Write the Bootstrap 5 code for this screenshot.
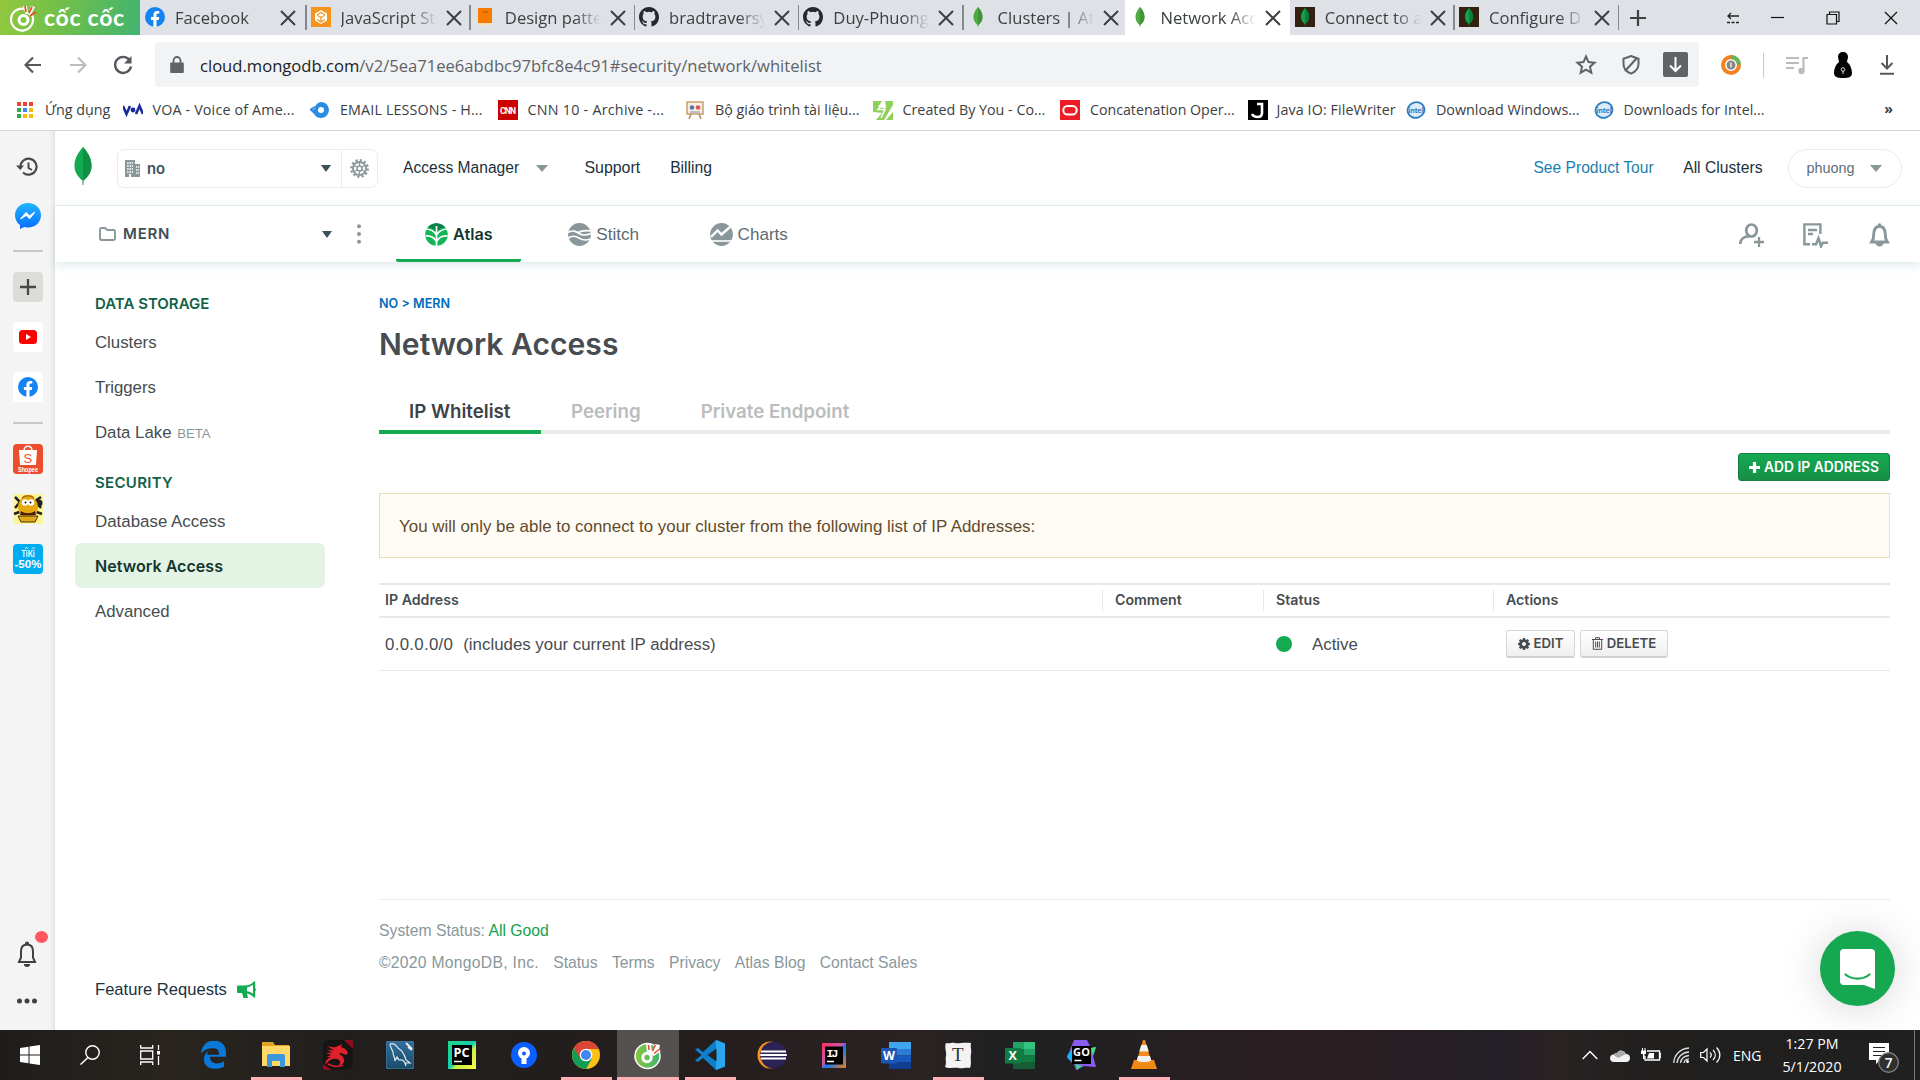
<!DOCTYPE html>
<html lang="en">
<head>
<meta charset="utf-8">
<title>Network Access | Cloud: MongoDB Cloud</title>
<link href="https://cdn.jsdelivr.net/npm/bootstrap@5.3.0/dist/css/bootstrap.min.css" rel="stylesheet">
<style>
  body{width:1920px;height:1080px;overflow:hidden;background:#fff;font-family:"Liberation Sans",Arial,sans-serif;color:#464c4f}
  svg{display:block;flex:none}
  .ui{font-family:"Open Sans","Noto Sans",sans-serif}
  .semi{font-family:Inter,"Liberation Sans",sans-serif;font-weight:600}
  .slot{display:flex;align-items:center;justify-content:center;flex:none}
  /* browser chrome */
  .tabstrip{height:35px;background:#dee1e6}
  .brand{width:140px;background:linear-gradient(100deg,#92c83e,#6fbf4b 45%,#41b471);color:#fff;padding-left:10px}
  .brand span{font-family:Lato,sans-serif;font-weight:700;font-size:23px;line-height:35px;margin-left:6px;letter-spacing:.7px}
  .btab{width:164.25px;height:35px;padding-left:5px;position:relative;color:#3c4043}
  .btab.first{width:165.6px}
  .btab.short{width:162.9px}
  .btab .fav{width:20px;height:20px;margin-top:-1px}
  .btab .ttl{width:97px;margin-left:10px;font-size:16.6px;line-height:35px;white-space:nowrap;overflow:hidden;-webkit-mask-image:linear-gradient(90deg,#000 72%,transparent 99%);mask-image:linear-gradient(90deg,#000 72%,transparent 99%)}
  .btab .cls{margin-left:8px}
  .btab.sep::after{content:"";position:absolute;right:-1px;top:5px;width:1.5px;height:25px;background:#85888c}
  .btab.on{background:#fff}
  .toolbar{height:60px;padding-left:10px}
  .omni{width:1544px;height:45px;margin-top:-1px;background:#f1f3f4;border-radius:4px;font-size:16.6px;color:#5f6368}
  .omni b{font-weight:400;color:#202124}
  .omni .addr{line-height:20px;padding-top:2px}
  .marks{height:36px;padding-left:15px;font-size:14.3px;color:#3c4043;border-bottom:1px solid #d5d6da;margin-top:0}
  .bm{width:187.5px;height:30px;flex:none;white-space:nowrap;gap:10px}
  /* side rail */
  .rail{width:55px;background:#f4f4f4;box-shadow:inset -4px 0 4px -3px #d8d8d8;padding-left:12.5px;position:relative}
  .rail hr{width:30px;margin:0;border:0;height:2px;background:#c9c9c9;opacity:1}
  .tile{width:30px;height:30px;border-radius:4px;background:#fff;display:flex;align-items:center;justify-content:center;margin-bottom:20px;overflow:hidden}
  /* cloud header */
  .top1{height:75px;border-bottom:1px solid #e8edeb;font-size:15.6px;color:#21313c;padding-left:19px}
  .top2{height:56px;box-shadow:0 3px 9px rgba(180,205,215,.45);position:relative;padding-left:43px;color:#5d6c74;font-size:17.1px}
  .orgbox{width:261px;height:39px;border:1px solid #e7eeec;border-radius:7px;margin-left:25px}
  .orgbox .cog{width:36px;height:37px;border-left:1px solid #e7eeec}
  .pill{width:114px;height:39px;border:1px solid #e7eeec;border-radius:20px;font-size:14.4px;color:#5d6c74;padding:0 19px 0 18px}
  .caret{width:0;height:0;border:6px solid transparent;border-top:7px solid #89979b;border-bottom:0;flex:none}
  .caret.dk{border-top-color:#3d4f58;border-left-width:5.5px;border-right-width:5.5px}
  .prod{height:56px;gap:5px;padding-top:1px}
  .prod.on{color:#13372f;border-bottom:3px solid #13aa52;padding-top:3px;border-radius:2px}
  /* left nav */
  .side{width:324px;padding:30px 0 0 20px;font-size:16.8px;color:#464c4f}
  .side h6{font-size:15px;color:#116149;margin:0;padding-left:20px;letter-spacing:0;line-height:23px}
  .side a{display:block;height:45px;line-height:45px;padding-left:20px;width:250px;color:inherit;text-decoration:none;border-radius:6px}
  .side a.low{line-height:47px}
  .side a.on{background:#e4f4e4;color:#13372f;font-size:16.1px}
  .side small{font-size:13.2px;color:#89979b;margin-left:1px}
  /* content */
  .content{width:1511px}
  .crumb{font-size:12.6px;line-height:20px;color:#006cbc;margin-top:32px}
  .content h1{font-size:30.1px;line-height:36px;margin:12px 0 0}
  .subtabs{border-bottom:4px solid #e7eae9;height:48px;margin-top:24px;font-size:18.7px;color:#babdbe}
  .subtabs div{height:48px;line-height:52px;border-bottom:4px solid transparent;padding:0 30px}
  .subtabs .on{width:162px;color:#3d4347;border-color:#13aa52}
  .addip{width:152px;height:28px;background:linear-gradient(#15aa54,#178e45);border:1px solid #14803f;border-radius:3px;color:#fff;font-size:13.8px;margin:19px 0 12px;padding:0;line-height:26px}
  .warnbox{height:65px;border:1px solid #f0ddb8;background:#fffcf5;border-radius:0;padding:0 0 0 19px;margin:0;color:#5f4b2b;font-size:16.92px;line-height:65px}
  .grid{margin-top:25px}
  .ghead{height:35px;border-top:2px solid #e7e9e9;border-bottom:2px solid #e7e9e9;font-size:14.2px;color:#464c4f}
  .grow{height:53px;border-bottom:1px solid #e7e9e9;font-size:16.85px;padding-top:1px}
  .ghead>div{height:21px;line-height:20px;padding-left:12px;border-left:1px solid #e7e9e9}
  .ghead>div:first-child{border:0;padding-left:6px}
  .c1{width:723px}.c2{width:161px}.c3{width:230px}.c4{flex:1}
  .gbtn{height:28px;border:1px solid #d3d7d7;border-bottom:2px solid #ccd1d1;border-radius:3px;background:linear-gradient(#fff,#efefef);font-size:13.2px;color:#464c4f;padding:0;line-height:25px;display:flex;align-items:center;justify-content:center;gap:4px;margin-top:-1px}
  .foot{margin-top:228px;border-top:1px solid #e9ebea;font-size:15.75px;color:#89979b;line-height:32px;padding-top:15px}
  .legal{font-size:15.7px;gap:14.3px}
  .legal span:first-child{letter-spacing:.28px}
  .chat{position:absolute;right:25px;top:800px;width:75px;height:75px;border-radius:50%;background:#16a851;box-shadow:0 2px 40px rgba(0,0,0,.17)}
  /* taskbar */
  .taskbar{height:50px;background:linear-gradient(90deg,#1f1d1c,#29241e 9%,#211f1e 18%,#241d1d 36%,#2b2223 48%,#1f2021 52%,#2a1e21 68%,#241f27 78%,#2a2324 81%,#201f1e 86%,#212020);color:#fff}
  .app{width:62px;height:50px;position:relative;display:flex;align-items:center;justify-content:center;flex:none}
  .app.run::after{content:"";position:absolute;left:5.5px;right:5.5px;bottom:0;height:3px;background:#ffb0b4}
  .app.cur{background:#53504f}.app.cur::after{left:0;right:0}
</style>
<script src="https://cdn.jsdelivr.net/npm/bootstrap@5.3.0/dist/js/bootstrap.bundle.min.js"></script>
</head>
<body class="d-flex flex-column">
<svg width="0" height="0" style="position:absolute"><defs>
  <symbol id="x" viewBox="0 0 16 16"><path d="M1 1l14 14M15 1L1 15" stroke="#3c4043" stroke-width="2" fill="none"/></symbol>
  <symbol id="gh" viewBox="0 0 16 16"><path fill="#24292e" d="M8 0C3.58 0 0 3.58 0 8c0 3.54 2.29 6.53 5.47 7.59.4.07.55-.17.55-.38 0-.19-.01-.82-.01-1.49-2.01.37-2.53-.49-2.69-.94-.09-.23-.48-.94-.82-1.13-.28-.15-.68-.52-.01-.53.63-.01 1.08.58 1.23.82.72 1.21 1.87.87 2.33.66.07-.52.28-.87.51-1.07-1.78-.2-3.64-.89-3.64-3.95 0-.87.31-1.59.82-2.15-.08-.2-.36-1.02.08-2.12 0 0 .67-.21 2.2.82a7.6 7.6 0 0 1 4 0c1.53-1.04 2.2-.82 2.2-.82.44 1.1.16 1.92.08 2.12.51.56.82 1.27.82 2.15 0 3.07-1.87 3.75-3.65 3.95.29.25.54.73.54 1.48 0 1.07-.01 1.93-.01 2.2 0 .21.15.46.55.38A8 8 0 0 0 16 8c0-4.42-3.58-8-8-8z"/></symbol>
  <symbol id="leaf" viewBox="0 0 20 20"><path d="M10 0C6.500 4 5.500 7 5.500 10c0 4 2 6 4 8l.3 2h.4l.3-2c2-2 4-4 4-8 0-3-1-6-4.500-10z" fill="#4faa41"/><path d="M10 0v18.300c2.500-2.300 4.500-4.300 4.500-8.300 0-3-1-6-4.500-10z" fill="#3f9636"/></symbol>
  <symbol id="leafd" viewBox="0 0 20 20"><path fill="#33200f" d="M0 0h20v20H0z"/><path d="M10 1C6.500 5 6 7.500 6 10c0 3.500 2 5.500 3.700 7l.1 2h.4l.1-2C12 15.500 14 13.500 14 10c0-2.500-.5-5-4-9z" fill="#12a14a"/><path d="M10 1v16c2-1.500 4-3.500 4-7 0-2.500-.5-5-4-9z" fill="#0b7f3a"/></symbol>
  <symbol id="fb" viewBox="0 0 20 20"><circle cx="10" cy="10" r="10" fill="#1484f2"/><path fill="#fff" d="M8.400 20v-7H5.900v-3h2.500V7.900c0-2.600 1.500-4 3.800-4 1.100 0 2.100.2 2.100.2v2.400h-1.200c-1.200 0-1.600.8-1.600 1.500v2h2.700l-.4 3h-2.300v7z"/></symbol>
  <symbol id="intel" viewBox="0 0 20 20"><ellipse cx="10" cy="10" rx="8.500" ry="7.800" fill="#dcebf7" stroke="#2b80c3" stroke-width="1.800" transform="rotate(-18 10 10)"/><text x="2.500" y="12.800" font-size="7.500" font-weight="700" fill="#1e6fb5" font-family="Lato" textLength="15">intel</text></symbol>
  <symbol id="cc" viewBox="0 0 28 32"><path d="M22 13A11 11 0 1 1 15 7" fill="none" stroke="#fff" stroke-width="2.200"/><circle cx="13.500" cy="18" r="4.500" fill="none" stroke="#fff" stroke-width="3"/><path d="M15.500 12L13 4l4 0 1 8zM18 12l3-8 4 1-5 9z" fill="#fff"/><path d="M16 10l-1-6M19 11l3-6M20 14l6-4" stroke="#ef4b34" stroke-width="1.700"/></symbol>
  <symbol id="cog" viewBox="0 0 16 16"><path fill-rule="evenodd" d="M6.600 0h2.800l.4 2 1.300.5L12.800 1.300l2 2-1.200 1.700.5 1.300 1.900.3v2.800l-1.900.4-.5 1.300 1.200 1.700-2 2-1.700-1.200-1.300.5-.4 1.900H6.600l-.4-1.900-1.300-.5-1.700 1.200-2-2 1.200-1.700-.5-1.300L0 9.400V6.600l1.900-.3.5-1.300L1.200 3.300l2-2 1.700 1.200L6.200 2zM8 5.300a2.700 2.700 0 1 0 0 5.400 2.700 2.700 0 0 0 0-5.400z"/></symbol>
</defs></svg>

<!-- tab strip -->
<div class="tabstrip d-flex ui flex-shrink-0">
  <div class="brand d-flex align-items-center"><svg width="28" height="32"><use href="#cc"/></svg><span>cốc cốc</span></div>
  <div class="btab first sep d-flex align-items-center"><svg class="fav"><use href="#fb"/></svg><span class="ttl">Facebook</span><svg class="cls" width="16" height="16"><use href="#x"/></svg></div>
  <div class="btab sep d-flex align-items-center"><svg class="fav" viewBox="0 0 20 20"><path fill="#f7941e" d="M0 0h20v20H0z"/><path d="M10 3l6 3.500v7L10 17l-6-3.500v-7z" fill="#fff"/><path d="M6 8l4-2.500L14 8M6 12.500l4 2.500 4-2.500M6 8l4 2.500 4-2.500M10 10.500V15" stroke="#f7941e" stroke-width="1.300" fill="none"/></svg><span class="ttl">JavaScript St</span><svg class="cls" width="16" height="16"><use href="#x"/></svg></div>
  <div class="btab sep d-flex align-items-center"><svg class="fav" viewBox="0 0 20 20"><path d="M3 1h14v15H3z" fill="#f57c00"/><path d="M3 16h14v2H4z" fill="#ffe0b8"/><path d="M8 5h5" stroke="#a85400"/></svg><span class="ttl">Design patte</span><svg class="cls" width="16" height="16"><use href="#x"/></svg></div>
  <div class="btab sep d-flex align-items-center"><svg class="fav"><use href="#gh"/></svg><span class="ttl">bradtraversy</span><svg class="cls" width="16" height="16"><use href="#x"/></svg></div>
  <div class="btab sep d-flex align-items-center"><svg class="fav"><use href="#gh"/></svg><span class="ttl">Duy-Phuong</span><svg class="cls" width="16" height="16"><use href="#x"/></svg></div>
  <div class="btab short d-flex align-items-center"><svg class="fav"><use href="#leaf"/></svg><span class="ttl">Clusters | At</span><svg class="cls" width="16" height="16"><use href="#x"/></svg></div>
  <div class="btab on d-flex align-items-center"><svg class="fav"><use href="#leaf"/></svg><span class="ttl">Network Acc</span><svg class="cls" width="16" height="16"><use href="#x"/></svg></div>
  <div class="btab sep d-flex align-items-center"><svg class="fav"><use href="#leafd"/></svg><span class="ttl">Connect to a</span><svg class="cls" width="16" height="16"><use href="#x"/></svg></div>
  <div class="btab sep d-flex align-items-center"><svg class="fav"><use href="#leafd"/></svg><span class="ttl">Configure D</span><svg class="cls" width="16" height="16"><use href="#x"/></svg></div>
  <div class="slot" style="width:40px"><svg width="16" height="16"><path d="M8 0v16M0 8h16" stroke="#3c4043" stroke-width="2.200"/></svg></div>
  <div class="d-flex ms-auto" style="padding-right:2px">
    <div class="slot" style="width:38px"><svg width="14" height="12"><path d="M2 4h11M5 1L2 4l3 3" stroke="#222" stroke-width="1.300" fill="none"/><path d="M1 10.500h13" stroke="#222" stroke-width="1.500" stroke-dasharray="3 1.500"/></svg></div>
    <div class="slot" style="width:50px"><svg width="13" height="10"><path d="M0 4.500h13" stroke="#111" stroke-width="1.200"/></svg></div>
    <div class="slot" style="width:62px"><svg width="14" height="14"><path d="M1 3.500h9.500v9.500H1zM3.500 3.500V1h9.500v9.500h-2.500" stroke="#111" stroke-width="1.200" fill="none"/></svg></div>
    <div class="slot" style="width:54px"><svg width="14" height="14"><path d="M1 1l12 12M13 1L1 13" stroke="#111" stroke-width="1.200"/></svg></div>
  </div>
</div>

<!-- toolbar -->
<div class="toolbar ui d-flex align-items-center flex-shrink-0">
  <div class="slot" style="width:45px"><svg width="18" height="18"><path d="M17 9H2M9 1.500L1.500 9 9 16.500" stroke="#55585c" stroke-width="2.200" fill="none"/></svg></div>
  <div class="slot" style="width:45px"><svg width="18" height="18"><path d="M1 9h15M9 1.500L16.500 9 9 16.500" stroke="#bcbec0" stroke-width="2.200" fill="none"/></svg></div>
  <div class="slot" style="width:45px"><svg width="20" height="20"><path d="M16.500 5A8 8 0 1 0 18 11.500" stroke="#55585c" stroke-width="2.400" fill="none"/><path d="M18.500 1v7.500H11z" fill="#55585c"/></svg></div>
  <div class="omni d-flex align-items-center" style="margin-left:10px">
    <div class="slot" style="width:44px;margin-right:1px"><svg width="14" height="18"><path d="M1 6.500h12a.8.8 0 0 1 .8.8v9a.8.8 0 0 1-.8.800H1a.8.8 0 0 1-.8-.8v-9a.8.8 0 0 1 .8-.8z" fill="#5f6368"/><path d="M3.500 7V4.500a3.500 3.500 0 0 1 7 0V7" stroke="#5f6368" stroke-width="1.800" fill="none"/></svg></div>
    <span class="addr"><b>cloud.mongodb.com</b>/v2/5ea71ee6abdbc97bfc8e4c91#security/network/whitelist</span>
    <div class="d-flex ms-auto" style="margin-right:1px">
      <div class="slot" style="width:45px"><svg width="22" height="22" viewBox="0 0 22 22"><path d="M11 2.500l2.500 5.600 6 .6-4.500 4 1.300 6L11 15.600l-5.300 3.100 1.300-6-4.500-4 6-.6z" stroke="#5f6368" stroke-width="2" fill="none"/></svg></div>
      <div class="slot" style="width:45px"><svg width="20" height="22"><path d="M10 2l7.500 2.800V10c0 5-3.500 8-7.500 9.700C6 18 2.500 15 2.500 10V4.800z" stroke="#5f6368" stroke-width="2" fill="none"/><path d="M4 17L16 4" stroke="#5f6368" stroke-width="2"/></svg></div>
      <div class="slot" style="width:45px"><svg width="25" height="25"><rect width="25" height="25" rx="2" fill="#5f6368"/><path d="M12.500 5v14M7 13.500l5.500 5.500 5.500-5.500" stroke="#fff" stroke-width="2" fill="none"/></svg></div>
    </div>
  </div>
  <div class="slot" style="width:64px"><svg width="20" height="20"><circle cx="10" cy="10" r="8" fill="none" stroke="#f58220" stroke-width="4"/><path d="M10 2a8 8 0 0 1 8 7.500" stroke="#5cb85c" stroke-width="4" fill="none"/><circle cx="10" cy="10" r="4.500" fill="#888"/><path d="M10 7.500v5" stroke="#fff" stroke-width="1.200"/></svg></div>
  <div style="width:1px;height:25px;background:#c8cacc"></div>
  <div class="slot" style="width:66px"><svg width="24" height="20"><path d="M1 3h13M1 8h13M1 13h8" stroke="#babcbe" stroke-width="2.200"/><path d="M18.500 16V3H23" stroke="#babcbe" stroke-width="2.200" fill="none"/><circle cx="16.500" cy="16" r="3.200" fill="#babcbe"/></svg></div>
  <div class="slot" style="width:25px"><svg width="18" height="26"><path d="M9 0c3 0 5 2 5 5 0 2-1 3-1 5 3 2 5 7 5 11 0 4-3 5-9 5s-9-1-9-5c0-4 2-9 5-11 0-2-1-3-1-5 0-3 2-5 5-5z" fill="#050505"/><circle cx="9" cy="17.500" r="1.800" fill="none" stroke="#ddd"/><path d="M9 19v3" stroke="#ddd"/></svg></div>
  <div class="slot" style="width:64px"><svg width="14" height="20"><path d="M7 0v13M1.500 8L7 13.500 12.500 8M0 18.800h14" stroke="#55585c" stroke-width="2" fill="none"/></svg></div>
</div>

<!-- bookmarks -->
<div class="marks ui d-flex flex-shrink-0">
  <div class="bm d-flex align-items-center" style="width:107.500px;gap:11px"><svg width="19" height="18"><g><path fill="#ea4335" d="M2 1h4v4H2zM8 1h4v4H8zM14 1h4v4h-4z"/><path fill="#34a853" d="M2 7h4v4H2zM2 13h4v4H2z"/><path fill="#4285f4" d="M8 7h4v4H8z"/><path fill="#fbbc05" d="M14 7h4v4h-4zM8 13h4v4H8zM14 13h4v4h-4z"/></g></svg><span>Ứng dụng</span></div>
  <div class="bm d-flex align-items-center"><svg width="20" height="20"><path d="M0 6l3.500 8L7 6M13 14l3.500-8 3.500 8" stroke="#1a2a9c" stroke-width="2.600" fill="none"/><circle cx="10" cy="10" r="2.400" fill="#1a2a9c"/></svg><span style="letter-spacing:.16px">VOA - Voice of Ame...</span></div>
  <div class="bm d-flex align-items-center"><svg width="20" height="20"><path d="M11 2a8 8 0 1 1-7 12l-4-4 5-1A7.500 7.500 0 0 1 11 2z" fill="#2b8de0"/><path d="M0 10l7-4" stroke="#2b8de0" stroke-width="2"/><circle cx="11" cy="10" r="3" fill="#fff"/></svg><span style="letter-spacing:.15px">EMAIL LESSONS - H...</span></div>
  <div class="bm d-flex align-items-center"><svg width="20" height="20"><path fill="#c00" d="M0 0h20v20H0z"/><text x="2" y="13.500" font-size="8.500" font-weight="700" fill="#fff" font-family="Roboto" textLength="16">CNN</text></svg><span style="letter-spacing:.25px">CNN 10 - Archive -...</span></div>
  <div class="bm d-flex align-items-center"><svg width="20" height="20"><path d="M2 2h16v12H2z" fill="#f7efe2" stroke="#c9a071" stroke-width="1.500"/><path d="M4 19l2-5M16 19l-2-5" stroke="#b98a57" stroke-width="1.500"/><circle cx="7" cy="7.500" r="2.300" fill="#57a"/><circle cx="13" cy="7.500" r="2.300" fill="#d55"/><path d="M5 12h10" stroke="#88a"/></svg><span>Bộ giáo trình tài liệu...</span></div>
  <div class="bm d-flex align-items-center"><svg width="20" height="20"><path d="M0 1h9L5 7l6 1-1 5L0 12zM12 1h8v4l-9 15H3l6-7 4-6z" fill="#8fcf5c"/><path d="M20 12v8h-7z" fill="#8fcf5c"/><path d="M12 2L5 9.500h7L8 18" stroke="#fff" stroke-width="1.500" fill="none"/></svg><span>Created By You - Co...</span></div>
  <div class="bm d-flex align-items-center"><svg width="20" height="20"><path fill="#ee1c25" d="M0 0h20v20H0z"/><rect x="3.300" y="6" width="13.400" height="8.500" rx="4.200" fill="none" stroke="#fff" stroke-width="2"/></svg><span style="font-size:14.200px">Concatenation Oper...</span></div>
  <div class="bm d-flex align-items-center" style="width:158.500px;gap:9px"><svg width="20" height="20"><path fill="#000" d="M0 0h20v20H0z"/><path d="M9 4h5v9c0 3-2 4-4.500 4S5 16 4 14" stroke="#fff" stroke-width="2.600" fill="none"/></svg><span style="letter-spacing:.1px">Java IO: FileWriter</span></div>
  <div class="bm d-flex align-items-center"><svg width="20" height="20"><use href="#intel"/></svg><span>Download Windows...</span></div>
  <div class="bm d-flex align-items-center"><svg width="20" height="20"><use href="#intel"/></svg><span style="font-size:14.200px">Downloads for Intel...</span></div>
  <div class="ms-auto fw-bold" style="padding-right:27px;line-height:28px">»</div>
</div>

<div class="d-flex flex-grow-1" style="height:899px;position:relative">
  <!-- rail -->
  <div class="rail d-flex flex-column flex-shrink-0">
    <div class="slot" style="width:30px;height:30px;margin-top:21px;margin-left:-1px"><svg width="22" height="20"><path d="M4.500 10A8 8 0 1 1 7 15.500" stroke="#46484a" stroke-width="2.200" fill="none"/><path d="M0 8.500h8L4.300 13z" fill="#46484a"/><path d="M12.500 5.500V11l3.500 2" stroke="#46484a" stroke-width="2" fill="none"/></svg></div>
    <div class="slot" style="width:30px;height:30px;margin-top:19px"><svg width="26" height="26"><defs><linearGradient id="mg" x2="0" y2="1"><stop stop-color="#1fb6ff"/><stop offset="1" stop-color="#0a6cff"/></linearGradient></defs><path d="M13 0c7.500 0 13 5.400 13 12.300S20.500 24.500 13 24.500c-1.300 0-2.600-.2-3.700-.5L5 26v-4C1.900 19.900 0 16.400 0 12.300 0 5.400 5.500 0 13 0z" fill="url(#mg)"/><path d="M5.500 16l5.500-6.500 3.500 3.300L20 9l-5.300 6.700-3.500-3.300z" fill="#fff" stroke="#fff"/></svg></div>
    <hr style="margin-top:19px">
    <div class="tile" style="margin-top:20px;background:#dcdcd9"><svg width="16" height="16"><path d="M8 0v16M0 8h16" stroke="#46484a" stroke-width="2.300"/></svg></div>
    <div class="tile"><svg width="18" height="14"><rect width="18" height="14" rx="3.500" fill="#f00"/><path d="M7 4l5 3-5 3z" fill="#fff"/></svg></div>
    <div class="tile"><svg width="20" height="20"><use href="#fb"/></svg></div>
    <hr>
    <div class="tile" style="margin-top:20px;background:#ee4d2d"><svg width="30" height="30"><path d="M6 6h18l-1 15H7z" fill="#fff"/><path d="M11 7c0-6.500 8-6.500 8 0" stroke="#fff" stroke-width="1.500" fill="none"/><text x="10.500" y="18.500" font-size="13" fill="#ee4d2d" font-family="Liberation Sans">S</text><text x="5" y="27.500" font-size="6.500" font-weight="700" fill="#fff" font-family="Liberation Sans" textLength="20" lengthAdjust="spacingAndGlyphs">Shopee</text></svg></div>
    <div class="tile" style="border-radius:0;background:#fdf59a"><svg width="30" height="30"><path d="M2 3l5 5-5 6M28 3l-6 4 6 7M1 20l8-3M29 20l-8-3" stroke="#222" stroke-width="2.500" fill="none"/><circle cx="26" cy="9" r="3.500" fill="#222"/><ellipse cx="15" cy="13" rx="10" ry="11" fill="#e5a912"/><path d="M9 4c3-3 9-3 12 0" stroke="#a46b08" fill="none" stroke-width="1.500"/><circle cx="12" cy="8.500" r="3.200" fill="#fff"/><circle cx="18" cy="8.500" r="3.200" fill="#fff"/><circle cx="12.500" cy="8.500" r=".9"/><circle cx="17.500" cy="8.500" r=".9"/><path d="M8 17c4 3 10 3 14 0l1 4H7z" fill="#4a1e0a"/><path d="M5 22h20l-3 6H8z" fill="#e2a917" stroke="#4a2a06"/></svg></div>
    <div class="tile" style="background:#00adf0"><svg width="30" height="30"><text x="8.500" y="13" font-size="9" font-weight="700" fill="#fff" font-family="Lato" textLength="13" lengthAdjust="spacingAndGlyphs">TiKi</text><path d="M12 4.800l1.500-1.500L15 4.800M19 4.800l1.500-1.500L22 4.800" stroke="#fff" fill="none"/><text x="1.500" y="24" font-size="11.500" font-weight="700" fill="#fff" font-family="Liberation Sans" textLength="27" lengthAdjust="spacingAndGlyphs">-50%</text></svg></div>
    <div class="mt-auto" style="position:relative;margin-left:4px"><svg width="20" height="26"><path d="M10 3.500c-4 0-6 3-6 7v6l-2 4.500h16l-2-4.500v-6c0-4-2-7-6-7z" stroke="#3f4143" stroke-width="2" fill="none"/><circle cx="10" cy="2.500" r="2" fill="#3f4143"/><path d="M7 23h6v1.500c-2 2-4 2-6 0z" fill="#3f4143"/></svg><span style="position:absolute;left:18px;top:-10px;width:13px;height:12px;border-radius:50%;background:#ff5660"></span></div>
    <div style="margin:31px 0 26px 4.500px"><svg width="20" height="6" fill="#3f4143"><circle cx="2.500" cy="3" r="2.500"/><circle cx="10" cy="3" r="2.500"/><circle cx="17.500" cy="3" r="2.500"/></svg></div>
  </div>

  <!-- app -->
  <div class="flex-grow-1">
    <div class="top1 d-flex align-items-center">
      <svg width="18" height="38" viewBox="0 0 18 38" style="margin-top:-4px"><path d="M9 0C3 7 .5 12 .5 19c0 7 4 11 7.800 14.500l.3 4.500h.8l.3-4.500C13.500 30 17.500 26 17.500 19 17.500 12 15 7 9 0z" fill="#13aa52"/><path d="M9 0v34c4-3.500 8.500-8 8.500-15C17.500 12 15 7 9 0z" fill="#0f9045"/><path d="M8.300 33h1.400l-.3 5h-.8z" fill="#a9b5ae"/></svg>
      <div class="orgbox d-flex align-items-center">
        <svg width="15" height="17" style="margin-left:7px"><path d="M0 0h10v4h5v13H0z" fill="#89979b"/><path d="M2 3h6M2 6h6M2 9h6M2 12h6" stroke="#fff" stroke-width="1.600" stroke-dasharray="1.600 .8"/><path d="M11 7h3M11 10h3M11 13h3" stroke="#fff" stroke-width="1.300" stroke-dasharray="1.200 .7"/><path d="M4 14h2v3H4z" fill="#fff"/></svg>
        <span class="semi" style="font-size:14.800px;margin-left:7px;padding-top:2px;color:#3d4f58">no</span>
        <span class="caret dk ms-auto" style="margin-right:10.500px"></span>
        <div class="cog slot"><svg width="19" height="19" viewBox="0 0 19 19"><circle cx="9.500" cy="9.500" r="8.300" fill="none" stroke="#89979b" stroke-width="2.200" stroke-dasharray="2.200 2.145"/><circle cx="9.500" cy="9.500" r="6.500" fill="none" stroke="#89979b" stroke-width="2"/><path d="M9.500 3v13M3.900 6.300l11.200 6.400M15.100 6.300L3.900 12.700" stroke="#89979b" stroke-width="1.200"/><circle cx="9.500" cy="9.500" r="2.500" fill="#fff" stroke="#89979b" stroke-width="1.500"/></svg></div>
      </div>
      <span style="margin-left:25px;width:133px">Access Manager</span><span class="caret"></span>
      <span style="margin-left:36.500px;font-size:15.900px">Support</span><span style="margin-left:30px;font-size:15.700px">Billing</span>
      <span class="ms-auto" style="color:#1a7fae">See Product Tour</span><span style="margin:0 25px 0 29.500px;font-size:15.700px">All Clusters</span>
      <div class="pill d-flex align-items-center justify-content-between" style="margin-right:18.500px"><span style="padding-top:2px">phuong</span><span class="caret"></span></div>
    </div>
    <div class="top2 d-flex align-items-center">
      <svg width="19" height="16"><path d="M2 3.500A1.500 1.500 0 0 1 3.500 2h3.700l2 2h6.300A1.500 1.500 0 0 1 17 5.500v7A1.500 1.500 0 0 1 15.500 14h-12A1.500 1.500 0 0 1 2 12.500z" fill="none" stroke="#89979b" stroke-width="1.900"/></svg>
      <span class="semi" style="font-size:15px;letter-spacing:.8px;margin-left:6px;padding-top:1px;color:#3d4f58">MERN</span>
      <span class="caret dk" style="margin-left:151.500px"></span>
      <svg width="4" height="20" style="margin-left:25.500px"><circle cx="2" cy="2.300" r="2" fill="#89979b"/><circle cx="2" cy="10" r="2" fill="#89979b"/><circle cx="2" cy="17.700" r="2" fill="#89979b"/></svg>
      <div class="prod on d-flex align-items-center justify-content-center semi" style="width:125px;margin-left:35px;font-size:16.200px;"><svg width="23" height="23" viewBox="0 0 23 23"><circle cx="11.500" cy="11.500" r="11.300" fill="#13b558"/><path d="M11.500 0C8 1 4 2 3 4.500c3 0 6 1 8.500 5 2.500-4 5.500-5 8.500-5C19 2 15 1 11.500 0z" fill="#0d7f4b"/><path d="M11.500 3v20M1 6c5 .5 9 3 10.500 6C13 9 17 6.500 22 6M.5 13c5-.5 9 2 11 5.500 2-3.500 6-6 11-5.500" stroke="#fff" stroke-width="1.700" fill="none"/></svg><span>Atlas</span></div>
      <div class="prod d-flex align-items-center" style="margin-left:47px"><svg width="23" height="23" viewBox="0 0 23 23"><circle cx="11.500" cy="11.500" r="11.400" fill="#89979b"/><path d="M0 9.500c5-3 8-1 11 1s7 2 12 0M0 15c5-3 8-2 11 0s6 3 11 1M9 10c4-2 8-3 14-2" stroke="#fff" stroke-width="1.700" fill="none"/></svg><span>Stitch</span></div>
      <div class="prod d-flex align-items-center" style="margin-left:70.500px"><svg width="23" height="23" viewBox="0 0 23 23"><circle cx="11.500" cy="11.500" r="11.400" fill="#89979b"/><path d="M1 14l6.500-6.500 4 4L20 4" stroke="#fff" stroke-width="2.400" fill="none"/><path d="M0 18h23" stroke="#fff" stroke-width="1.600"/></svg><span>Charts</span></div>
      <div class="d-flex ms-auto align-items-center" style="gap:39px;margin-right:30px;padding-top:2px">
        <svg width="25" height="24"><ellipse cx="12.500" cy="7.500" rx="5.300" ry="6" fill="none" stroke="#89979b" stroke-width="2.700"/><path d="M1.300 21c0-5 4-7.500 9-7.800" stroke="#89979b" stroke-width="2.700" fill="none"/><path d="M20 14v10M15 19h10" stroke="#89979b" stroke-width="2.300"/></svg>
        <svg width="25" height="25"><path d="M7 21.200H1.400V1.400h16V11M5 7h9M5 11h5" stroke="#89979b" stroke-width="2.400" fill="none"/><path d="M9 21.200h4l2.500-6 2.500 8 2-3.500h5" stroke="#89979b" stroke-width="2.500" fill="none"/></svg>
        <svg width="21" height="24" style="margin-left:2px"><path d="M10.500 3.500c-4 0-5.500 3-5.700 7l-.5 5L2.500 19h16l-1.800-3.500-.5-5c-.2-4-1.700-7-5.700-7z" stroke="#89979b" stroke-width="2.800" fill="none"/><circle cx="10.500" cy="2" r="1.800" fill="#89979b"/><path d="M6.500 20h8c0 4.500-8 4.500-8 0z" fill="#89979b"/></svg>
      </div>
    </div>

    <div class="d-flex" style="height:768px">
      <div class="side d-flex flex-column flex-shrink-0">
        <h6 class="semi">DATA STORAGE</h6>
        <a style="margin-top:5px">Clusters</a><a>Triggers</a><a>Data Lake <small>BETA</small></a>
        <h6 class="semi" style="margin:16px 0 4px;letter-spacing:.3px">SECURITY</h6>
        <a class="low" style="font-size:16.900px">Database Access</a><a class="low on semi">Network Access</a><a class="low">Advanced</a>
        <a class="mt-auto d-flex align-items-center" style="margin-bottom:18px;font-size:16.600px;color:#21313c"><span>Feature Requests</span><svg width="19" height="18" style="margin-left:10px"><path d="M0 5.500C0 5 .5 4.500 1 4.500h7C12 4.500 14.500 3 17 .5c.7-.5 1.200 0 1.200.5v6.500c1 .5 1 2 0 2.500V16c0 .5-.5 1-1.200.5-2.500-2.500-4.500-3.500-7-4l1 4.500H6.500L5 12H1c-.5 0-1-.5-1-1z" fill="#13aa52"/><path d="M16 3.800v9c-2-1.500-4-2.300-6-2.500V6.500c2-.3 4-1.200 6-2.700z" fill="#fff"/></svg></a>
      </div>
      <div class="content">
        <div class="crumb semi">NO &gt; MERN</div>
        <h1 class="semi">Network Access</h1>
        <div class="subtabs semi d-flex"><div class="on">IP Whitelist</div><div>Peering</div><div>Private Endpoint</div></div>
        <div class="d-flex justify-content-end"><button class="btn addip semi d-flex align-items-center justify-content-center"><svg width="11" height="11" style="margin-right:4px"><path d="M5.500 0v11M0 5.500h11" stroke="#fff" stroke-width="3.200"/></svg>ADD IP ADDRESS</button></div>
        <div class="alert warnbox">You will only be able to connect to your cluster from the following list of IP Addresses:</div>
        <div class="grid">
          <div class="ghead semi d-flex align-items-center"><div class="c1">IP Address</div><div class="c2">Comment</div><div class="c3">Status</div><div class="c4">Actions</div></div>
          <div class="grow d-flex align-items-center">
            <div class="c1" style="padding-left:6px"><span style="letter-spacing:.3px">0.0.0.0/0</span><span style="margin-left:10px">(includes your current IP address)</span></div><div class="c2"></div>
            <div class="c3 d-flex align-items-center" style="padding-left:13px"><span class="rounded-circle" style="width:16px;height:16px;background:#13aa52;margin-right:20px"></span>Active</div>
            <div class="c4 d-flex" style="padding-left:13px;gap:5px"><button class="gbtn semi" style="width:69px"><svg width="12" height="12" fill="#464c4f"><use href="#cog"/></svg>EDIT</button><button class="gbtn semi" style="width:88px"><svg width="11" height="13"><path d="M0 2.500h11M3.500 2V.7h4V2M1.300 3v9.300h8.400V3M3.700 4.500v6M5.500 4.500v6M7.300 4.500v6" stroke="#54485c" fill="none"/></svg>DELETE</button></div>
          </div>
        </div>
        <div class="foot">
          <div>System Status: <span style="color:#13a04e">All Good</span></div>
          <div class="legal d-flex"><span>©2020 MongoDB, Inc.</span><span>Status</span><span>Terms</span><span>Privacy</span><span>Atlas Blog</span><span>Contact Sales</span></div>
        </div>
      </div>
    </div>
  </div>
  <div class="chat slot"><svg width="36" height="40"><path d="M4 0h27a4 4 0 0 1 4 4v36l-11-4H4a4 4 0 0 1-4-4V4a4 4 0 0 1 4-4z" fill="#fff"/><path d="M5.500 25.500c7 5.500 17 5.500 24 0" stroke="#16a851" stroke-width="2.200" fill="none" stroke-linecap="round"/></svg></div>
</div>

<!-- taskbar -->
<div class="taskbar ui d-flex flex-shrink-0">
  <div class="app" style="width:60px"><svg width="20" height="20"><path fill="#fff" d="M0 3l8.500-1.200v7.700H0zM9.500 1.600L20 0v9.500H9.500zM0 10.500h8.500v7.700L0 17zM9.500 10.500H20V20L9.500 18.400z"/></svg></div>
  <div class="app" style="width:60px"><svg width="20" height="20"><circle cx="12.500" cy="7.500" r="6.700" fill="none" stroke="#fff" stroke-width="1.400"/><path d="M8 12.500L.5 19.500" stroke="#fff" stroke-width="1.500"/></svg></div>
  <div class="app" style="width:60px"><svg width="20" height="20"><path d="M.7 0v3h12V0M.7 20v-3h12v3M.7 6h12v8H.7zM18.500 0v5M18.500 11v9" stroke="#fff" stroke-width="1.300" fill="none"/><path d="M17 6h3v3.500h-3z" fill="#fff"/></svg></div>
  <div class="app" style="margin-left:3px"><svg width="26" height="28" viewBox="0 0 26 28"><path d="M0 13C1 4 6 0 13 0c8 0 12 5 12 12v4H9c0 8 9 8 14 4.500v5.500c-3 1.500-6 2-9 2-8 0-12-5-11-11 .5-4 3-6 5-7-1 1-1.700 2.500-2 4h12c0-5-2-6.500-6-6.500C7 7.500 3 9 0 13z" fill="#0a78d7" transform="translate(0 -.3)"/></svg></div>
  <div class="app run"><svg width="28" height="28"><path d="M0 1h11l2 3h14v20H0z" fill="#e0a526"/><path d="M0 5h28v20H0z" fill="#ffd868"/><path d="M5 26V15c0-1 .7-2 2-2h14c1.300 0 2 1 2 2v11h-5v-6h-8v6z" fill="#3a97dc"/></svg></div>
  <div class="app"><svg width="30" height="30"><rect width="30" height="30" rx="6" fill="#171414"/><path d="M0 24v4c0 1 1 2 2 2h7zM21 0h7c1 0 2 1 2 2v7z" fill="#8f0d1c"/><path d="M4 6c4 1 8 2 11 0l4-2-1 3c4 1 6 3 7 6l-2 2-5-2-2 1c4 2 6 5 5 8-1 2-3 3-5 3 2-3 1-5-2-6-4-1-8 1-11 5l-1-1c1-3 3-5 6-6H3l5-2-5-2 6-.5-5-3 7 1z" fill="#e0202a"/><path d="M5 24c5 3 10 3 15 1" stroke="#e0202a" stroke-width="1.500" fill="none"/></svg></div>
  <div class="app"><svg width="28" height="28"><defs><linearGradient id="my" x2="0" y2="1"><stop stop-color="#2f6f9c"/><stop offset="1" stop-color="#1b4c68"/></linearGradient></defs><rect width="28" height="28" rx="3" fill="url(#my)" stroke="#467fa5"/><path d="M4 3c3-1 6 1 8 4 5 3 7 8 8 12l4 3-5 0 1 3M4 3c0 3 2 5 3 8 0 4 2 5 2 9l2-4 2 3c4-1 6 2 7 5" stroke="#dfeaf2" stroke-width="1.200" fill="none"/><path d="M20 2l6 6M22 6l4 3" stroke="#eee" stroke-width="1.800"/></svg></div>
  <div class="app"><svg width="28" height="28"><defs><linearGradient id="pc" x2="1" y2="1"><stop stop-color="#21d789"/><stop offset=".5" stop-color="#15cfae"/><stop offset=".6" stop-color="#c9f042"/><stop offset="1" stop-color="#fcf84a"/></linearGradient></defs><path fill="url(#pc)" d="M0 0h28v28H0z"/><path d="M4 4h20v20H4z"/><text x="5.500" y="15.500" font-size="12.500" font-weight="700" fill="#fff" font-family="Open Sans" textLength="16" lengthAdjust="spacingAndGlyphs">PC</text><path d="M6 20.500h8" stroke="#fff" stroke-width="1.500"/></svg></div>
  <div class="app"><svg width="26" height="26"><circle cx="13" cy="13" r="13" fill="#0b5fff"/><circle cx="13" cy="11" r="6" fill="#fff"/><path d="M10.500 15h5v7h-5z" fill="#fff"/><circle cx="13" cy="11.500" r="2" fill="#0b5fff"/></svg></div>
  <div class="app run"><svg width="28" height="28"><circle cx="14" cy="14" r="14" fill="#fbc116"/><path d="M14 0A14 14 0 0 0 1.900 7l6 10.500L14 8h12.600A14 14 0 0 0 14 0z" fill="#db4437"/><path d="M1.900 7A14 14 0 0 0 14 28l6-10.500-11.500 0z" fill="#0f9d58"/><circle cx="14" cy="14" r="6.300" fill="#fff"/><circle cx="14" cy="14" r="5" fill="#4285f4"/></svg></div>
  <div class="app run cur"><svg width="30" height="30"><defs><linearGradient id="cg" x2="1"><stop stop-color="#8cc63f"/><stop offset="1" stop-color="#3cb371"/></linearGradient></defs><circle cx="14.500" cy="16" r="12.500" fill="url(#cg)" stroke="#fff" stroke-width="1.500"/><circle cx="14" cy="17.500" r="4.200" fill="none" stroke="#fff" stroke-width="3"/><path d="M14 13l-1-9 5 0 1 8 3-8 5 1-1 5 2 1-7 5z" fill="#fff"/><path d="M16 10l-.5-5M19.500 11l3-6M21 13.500l5-4" stroke="#ef4b34" stroke-width="1.600"/></svg></div>
  <div class="app run"><svg width="30" height="30"><path d="M21 0l9 3.500v23L21 30 8 18l-5 4-3-1.500L6.500 15 0 9.500 3 8l5 4z" fill="#0f7fcb"/><path d="M21 0l9 3.500v23L21 30z" fill="#2aa5f0"/><path d="M21.500 8.500v13L12.500 15z" fill="#261f20"/></svg></div>
  <div class="app"><svg width="30" height="28"><ellipse cx="13" cy="14" rx="12.500" ry="13.500" fill="#f7941e"/><circle cx="16.500" cy="14" r="13.300" fill="#2c2255"/><path d="M4 10.500h25M3.300 14h26.500M4 17.500h25" stroke="#fff" stroke-width="2"/></svg></div>
  <div class="app"><svg width="24" height="25"><defs><linearGradient id="ij" x2="1" y2="1"><stop stop-color="#fe315d"/><stop offset=".45" stop-color="#c757a8"/><stop offset=".55" stop-color="#087cfa"/><stop offset="1" stop-color="#f97a12"/></linearGradient></defs><path fill="url(#ij)" d="M0 0h24v25H0z"/><path d="M3 3.500h18v18H3z"/><text x="4.500" y="13.500" font-size="11.500" font-weight="700" fill="#fff" font-family="Liberation Mono" textLength="12">IJ</text><path d="M5 18.500h7" stroke="#fff" stroke-width="1.500"/></svg></div>
  <div class="app"><svg width="30" height="27"><path fill="#41a5ee" d="M8 0h22v7H8z"/><path fill="#2b7cd3" d="M8 7h22v6.500H8z"/><path fill="#185abd" d="M8 13.500h22V20H8z"/><path fill="#103f91" d="M8 20h22v7H8z"/><rect y="6" width="16" height="15.500" rx="1" fill="#1a56b8"/><text x="2" y="18" font-size="12.500" font-weight="700" fill="#fff" font-family="Open Sans" textLength="12" lengthAdjust="spacingAndGlyphs">W</text></svg></div>
  <div class="app run"><svg width="28" height="28"><path d="M2 2c4 1 6-1 9 0s8-1 16 0c-1 4 1 8 0 11s1 9-1 14c-4-1-8 1-11 0s-10 1-14-1c2-4 0-8 1-11S0 6 2 2z" fill="#f3f3f3"/><text x="8" y="20" font-size="19" fill="#333" font-family="Liberation Serif">T</text></svg></div>
  <div class="app"><svg width="30" height="27"><path fill="#21a366" d="M8 0h11v13.500H8z"/><path fill="#33c481" d="M19 0h11v7H19z"/><path fill="#21a366" d="M19 7h11v6.500H19z"/><path fill="#107c41" d="M8 7h11v13H8zM19 13.500h11V20H19z"/><path fill="#185c37" d="M8 20h22v7H8z"/><rect y="6" width="16" height="15.500" rx="1" fill="#107c41"/><text x="3.500" y="18" font-size="12.500" font-weight="700" fill="#fff" font-family="Open Sans">X</text></svg></div>
  <div class="app"><svg width="30" height="30"><path d="M7 0h13l4 8 5-1-3 9 3 11-12-1-8 4-2-6-7-6 3-8z" fill="#8a5cf5"/><path d="M7 6L0 16l5 7 3-3z" fill="#12b5f5"/><path d="M24 8l5-1-3 9M9 24l1 6 5-4z" fill="#3be27c"/><path d="M5 6h19v18H5z"/><text x="6" y="16" font-size="11" font-weight="700" fill="#fff" font-family="Open Sans" textLength="17">GO</text><path d="M7.500 20.500h7" stroke="#fff" stroke-width="1.500"/></svg></div>
  <div class="app run"><svg width="26" height="30"><path d="M3 20h20l3 9H0z" fill="#f08a12"/><path d="M12 0h2l6.500 22c-3 2.500-12 2.500-15 0z" fill="#f58a1f"/><path d="M10.200 6h5.600l2 6.500H8.200zM7 17h12l1.300 4.500c-4 2-10.500 2-14.600 0z" fill="#f1f1f1" transform="translate(0 -1)"/></svg></div>
  <div class="d-flex ms-auto align-items-center" style="font-size:14px">
    <div class="slot" style="width:30px"><svg width="16" height="10"><path d="M.7 9L8 1.500 15.300 9" stroke="#fff" stroke-width="1.400" fill="none"/></svg></div>
    <div class="slot" style="width:30px"><svg width="20" height="13"><path d="M7 4a5 5 0 0 1 9 1c3 0 4 2 4 4s-1 4-4 4H4c-3 0-4-2-4-4s2-4 4-3.500A4 4 0 0 1 7 4z" fill="#f2f2f2"/><path d="M7 4a5 5 0 0 1 9 1L8 9 3 5.500A4 4 0 0 1 7 4z" fill="#aaa"/></svg></div>
    <div class="slot" style="width:31px"><svg width="20" height="14"><path d="M6 3h12.500v9H4V8M18.500 5.500H20v4h-1.500" stroke="#fff" stroke-width="1.300" fill="none"/><path d="M8 5h5v5.500H6zM0 2.500h5V6H0zM1 0h1v3H1zM3.500 0h1v3h-1zM2 6h1.500v5H2z" fill="#fff"/></svg></div>
    <div class="slot" style="width:30px"><svg width="17" height="16"><path d="M.8 16C1 8 7 1.500 16 1M4 16C4.500 10 9 5.500 16 5M7.500 16c.5-4 3-7 8.500-7.500M11 16c.3-2 2-4 5-4.200" stroke="#ddd" stroke-width="1.300" fill="none"/><circle cx="14.500" cy="14.500" r="1.500" fill="#fff"/></svg></div>
    <div class="slot" style="width:30px"><svg width="22" height="18"><path d="M.7 6.500H3.500L7 3v12l-3.500-3.500H.7z" stroke="#fff" stroke-width="1.200" fill="none"/><path d="M10 6.500c1.500 1.500 1.500 3.500 0 5M13 4c3 3 3 7 0 10M16.500 1.500c4.500 4.500 4.500 10.500 0 15" stroke="#fff" stroke-width="1.200" fill="none"/></svg></div>
    <div style="width:44px;padding-left:7px">ENG</div>
    <div class="text-center" style="width:84px;line-height:23px;font-size:14.200px;padding-right:10px;margin-left:5px">1:27&nbsp;PM<br>5/1/2020</div>
    <div style="width:55px;position:relative;padding-left:10px"><svg width="32" height="32" style="margin-top:6px"><path d="M0 1h20v17h-9l-4 4v-4H0z" fill="#fff"/><path d="M4 5.500h12M4 9.500h12M4 13.500h9" stroke="#222" stroke-width="1.200"/><circle cx="19.500" cy="20.500" r="9.800" fill="#303030" stroke="#8a8a8a" stroke-width="1.200"/><text x="15.800" y="26" font-size="13.500" font-weight="600" fill="#fff" font-family="Open Sans">7</text></svg></div>
    <div style="width:6px;height:50px;border-left:1px solid #777"></div>
  </div>
</div>
</body>
</html>
